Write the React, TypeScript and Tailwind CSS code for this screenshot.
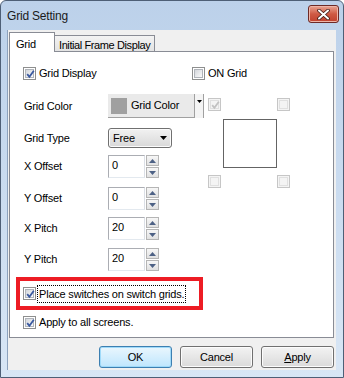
import React from "react";

const font = "font-['Liberation_Sans',Arial,sans-serif]";

function Check({ checked, disabled }: { checked?: boolean; disabled?: boolean }) {
  return (
    <span
      className={`relative flex h-[13px] w-[13px] shrink-0 items-center justify-center border ${
        disabled ? "border-[#c6c6c6] bg-[#f4f4f4]" : "border-[#8e8f8f] bg-white"
      }`}
    >
      <span
        className={`h-[9px] w-[9px] border ${
          disabled
            ? "border-[#e0e0e0] bg-[#f4f4f4]"
            : "border-[#b0b4ba] bg-gradient-to-br from-[#d3d6db] to-[#fbfbfb]"
        }`}
      />
      {checked && (
        <svg className="absolute left-[1px] top-[1px]" width="11" height="11" viewBox="0 0 11 11">
          <path
            d="M2.2 5.2 L4.4 7.8 L8.8 1.8"
            fill="none"
            stroke={disabled ? "#c2c2c2" : "#3b5aa0"}
            strokeWidth="1.8"
          />
        </svg>
      )}
    </span>
  );
}

function Tri({ up }: { up?: boolean }) {
  return (
    <svg width="7" height="4" viewBox="0 0 7 4">
      <path d={up ? "M0 4 L3.5 0 L7 4 Z" : "M0 0 L3.5 4 L7 0 Z"} fill="#4d6185" />
    </svg>
  );
}

function Spin({ value }: { value: string }) {
  return (
    <div className="flex h-[23px]">
      <div className="flex w-[37px] items-start border border-[#abadb3] border-b-[#e3e9ef] border-r-[#dbdfe6] bg-white pl-[3px] pt-[3px] text-[11px] leading-[13px]">
        {value}
      </div>
      <div className="ml-px flex w-[13px] flex-col gap-px">
        <div className="flex h-[11px] items-center justify-center border border-[#b5b5b5] bg-gradient-to-b from-[#f7f7f7] to-[#e1e1e1]">
          <Tri up />
        </div>
        <div className="flex h-[11px] items-center justify-center border border-[#b5b5b5] bg-gradient-to-b from-[#f7f7f7] to-[#e1e1e1]">
          <Tri />
        </div>
      </div>
    </div>
  );
}

function Row({ label, h, mt, children }: { label: string; h: string; mt: string; children: React.ReactNode }) {
  return (
    <div className={`flex items-center ${h} ${mt}`}>
      <span className="w-[84px] shrink-0">{label}</span>
      {children}
    </div>
  );
}

function Btn({ label, primary, under }: { label: string; primary?: boolean; under?: boolean }) {
  return (
    <div
      className={`flex h-[22px] w-[73px] items-center justify-center rounded-[3px] border ${
        primary
          ? "border-[#3c7fb1] bg-gradient-to-b from-[#eaf6fd] to-[#bee6fd] shadow-[inset_0_0_0_1px_#9fdaf9]"
          : "border-[#707070] bg-gradient-to-b from-[#f3f3f3] to-[#dadada] shadow-[inset_0_0_0_1px_#fcfcfc]"
      }`}
    >
      {under ? (
        <span>
          <span className="underline">A</span>
          {label.slice(1)}
        </span>
      ) : (
        label
      )}
    </div>
  );
}

export default function App() {
  return (
    <div
      className={`${font} h-[378px] w-[344px] overflow-hidden rounded-t-[6px] border border-[#4e5f76] bg-gradient-to-b from-[#bcd1ea] to-[#d8e6f5] text-[11px] tracking-[-0.2px] text-black`}
    >
      <div className="flex h-[29px] items-start justify-between pl-[6px] pr-[4px]">
        <span className="mt-[6px] text-[12px] text-[#1a1a1a]">Grid Setting</span>
        <div className="mt-[4px] flex h-[18px] w-[31px] items-center justify-center rounded-[3px] border border-[#6d2a26] bg-gradient-to-b from-[#e8a493] via-[#cf5a44] to-[#c0412e] shadow-[inset_0_0_0_1px_#eeb5a8]">
          <svg width="13" height="11" viewBox="0 0 13 11">
            <path d="M2 1.5 L11 9.5 M11 1.5 L2 9.5" stroke="#3d1a15" strokeWidth="3.6" strokeLinecap="round" />
            <path d="M2 1.5 L11 9.5 M11 1.5 L2 9.5" stroke="#ffffff" strokeWidth="2" strokeLinecap="round" />
          </svg>
        </div>
      </div>

      <div className="ml-[6px] flex h-[340px] w-[329px] flex-col border-l border-[#8da2bd] bg-[#f0f0f0]">
        <div className="ml-px mt-[2px] flex h-[19px] items-end">
          <div className="relative z-10 -mb-px flex h-[20px] w-[46px] items-start border border-b-0 border-[#898c95] bg-white pl-[6px] pt-[3px]">
            Grid
          </div>
          <div className="-ml-px flex h-[16px] w-[101px] items-start whitespace-nowrap border border-b-0 border-[#898c95] bg-gradient-to-b from-[#f3f3f3] to-[#e3e3e3] pl-[4px] pt-[1px] tracking-[-0.4px]">
            Initial Frame Display
          </div>
        </div>

        <div className="ml-px flex h-[287px] w-[325px] flex-col border border-[#898c95] bg-white">
          <div className="mt-[15px] flex h-[13px] items-center pl-[13px]">
            <div className="flex w-[169px] items-center gap-[3px]">
              <Check checked />
              <span>Grid Display</span>
            </div>
            <div className="flex items-center gap-[3px]">
              <Check />
              <span>ON Grid</span>
            </div>
          </div>

          <div className="mt-[14px] flex pl-[14px]">
            <div className="flex w-[183px] flex-col">
              <Row label="Grid Color" h="h-[24px]" mt="mt-0">
                <div className="flex h-[24px] w-[86px] items-center border-b border-[#a0a0a0] bg-[#eaeaea] pl-[3px]">
                  <span className="h-[16px] w-[16px] bg-[#a0a0a0]" />
                  <span className="ml-[4px]">Grid Color</span>
                </div>
                <div className="flex h-[24px] w-[10px] justify-center border-x border-[#a0a0a0] bg-[#f4f4f4] pt-[6px]">
                  <svg width="5" height="3" viewBox="0 0 5 3">
                    <path d="M0 0 L5 0 L2.5 3 Z" fill="#000" />
                  </svg>
                </div>
              </Row>
              <Row label="Grid Type" h="h-[20px]" mt="mt-[10px]">
                <div className="flex h-[20px] w-[64px] items-center justify-between rounded-[3px] border border-[#707070] bg-gradient-to-b from-[#f2f2f2] to-[#d8d8d8] pl-[4px] pr-[4px] shadow-[inset_0_0_0_1px_#fbfbfb]">
                  <span>Free</span>
                  <svg width="7" height="4" viewBox="0 0 7 4">
                    <path d="M0 0 L7 0 L3.5 4 Z" fill="#000" />
                  </svg>
                </div>
              </Row>
              <Row label="X Offset" h="h-[23px]" mt="mt-[7px]">
                <Spin value="0" />
              </Row>
              <Row label="Y Offset" h="h-[23px]" mt="mt-[9px]">
                <Spin value="0" />
              </Row>
              <Row label="X Pitch" h="h-[23px]" mt="mt-[7px]">
                <Spin value="20" />
              </Row>
              <Row label="Y Pitch" h="h-[23px]" mt="mt-[8px]">
                <Spin value="20" />
              </Row>
            </div>

            <div className="ml-px mt-[4px] flex w-[82px] flex-col">
              <div className="flex justify-between">
                <Check checked disabled />
                <Check disabled />
              </div>
              <div className="ml-[15px] mt-[8px] h-[49px] w-[54px] border border-[#646464]" />
              <div className="mt-[7px] flex justify-between">
                <Check disabled />
                <Check disabled />
              </div>
            </div>
          </div>

          <div className="ml-[6px] mt-[6px] flex h-[33px] w-[187px] items-center border-[4px] border-[#ed1c24] pl-[3px]">
            <Check checked />
            <span className="ml-[1px] border border-dotted border-black px-[1px] py-px leading-[14px]">
              Place switches on switch grids.
            </span>
          </div>

          <div className="mt-[4px] flex items-center gap-[3px] pl-[13px]">
            <Check checked />
            <span>Apply to all screens.</span>
          </div>
        </div>

        <div className="mt-[8px] flex justify-end gap-[8px] pr-[2px]">
          <Btn label="OK" primary />
          <Btn label="Cancel" />
          <Btn label="Apply" under />
        </div>
      </div>
    </div>
  );
}
